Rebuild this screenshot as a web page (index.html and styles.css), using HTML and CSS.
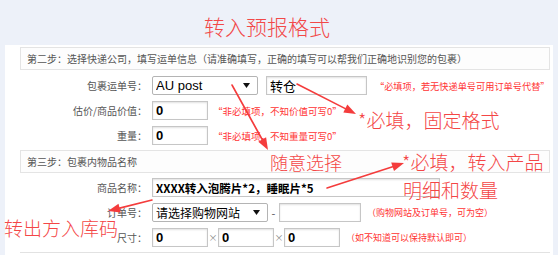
FILE: index.html
```html
<!DOCTYPE html>
<html>
<head>
  <title>转入预报格式</title>
  <link rel="stylesheet" href="styles.css">
</head>
<body>
  <h1 class="title">转入预报格式</h1>

  <div class="panel">
    <div class="step">第二步：选择快递公司，填写运单信息（请准确填写，正确的填写可以帮我们正确地识别您的包裹）</div>
    <div class="rows first">
      <div class="row">
        <label>包裹运单号：</label>
        <select class="sel carrier"><option>AU post</option></select>
        <input class="txt track" type="text" value="转仓">
        <span class="note track-note">“必填项，若无快递单号可用订单号代替”</span>
      </div>
      <div class="row">
        <label>估价/商品价值：</label>
        <input class="txt num" type="text" value="0">
        <span class="note">“非必填项，不知价值可写0”</span>
      </div>
      <div class="row">
        <label>重量：</label>
        <input class="txt num" type="text" value="0">
        <span class="note">“非必填项，不知重量可写0”</span>
      </div>
    </div>

    <div class="step step3">第三步：包裹内物品名称</div>
    <div class="rows">
      <div class="row">
        <label>商品名称：</label>
        <input class="txt goods" type="text" value="XXXX转入泡腾片*2，睡眠片*5">
      </div>
      <div class="row">
        <label>订单号：</label>
        <select class="sel shop"><option>请选择购物网站</option></select>
        <span class="dash">-</span>
        <input class="txt order" type="text" value="">
        <span class="note order-note">（购物网站及订单号，可为空）</span>
      </div>
      <div class="row">
        <label>尺寸：</label>
        <input class="txt num" type="text" value="0">
        <span class="times">×</span>
        <input class="txt num" type="text" value="0">
        <span class="times">×</span>
        <input class="txt num" type="text" value="0">
        <span class="note size-note">（如不知道可以保持默认即可）</span>
      </div>
    </div>
    <div class="rule"></div>
  </div>

  <!-- red hand-drawn notes on top of the screenshot -->
  <svg class="arrows" width="558" height="255" viewBox="0 0 558 255">
    <g stroke="#f43c3c" stroke-width="1.6" stroke-linecap="round">
      <line x1="297" y1="84" x2="345.3" y2="108.6"/>
      <line x1="232" y1="85" x2="262.2" y2="139.5"/>
      <line x1="327" y1="188" x2="392.6" y2="166.7"/>
      <line x1="152" y1="200" x2="119.6" y2="208.1"/>
    </g>
    <g fill="#f43c3c">
      <polygon points="356,114 343.3,112.6 347.3,104.6"/>
      <polygon points="268,150 258.3,141.7 266.1,137.3"/>
      <polygon points="404,163 394,171 391.2,162.4"/>
      <polygon points="108,211 118.5,203.7 120.7,212.5"/>
    </g>
  </svg>
  <span class="mark mark-fixed">*必填，固定格式</span>
  <span class="mark mark-any">随意选择</span>
  <span class="mark mark-goods">*必填，转入产品</span>
  <span class="mark mark-detail">明细和数量</span>
  <span class="mark mark-code">转出方入库码</span>
</body>
</html>
```

FILE: styles.css
```css
* {
  box-sizing: border-box;
  margin: 0;
  padding: 0;
}

body {
  font-family: "Noto Sans CJK SC", sans-serif;
  background: #edf1f9;
  width: 558px;
  height: 255px;
  overflow: hidden;
  position: relative;
}

.title {
  height: 45px;
  padding: 14px 24px 0 0;
  text-align: center;
  font-size: 21px;
  line-height: 24px;
  font-weight: 300;
  color: #f24848;
}

.panel {
  margin: 0 5px;
  background: #fff;
  padding: 2px 3px 0 0;
  height: 210px;
}

.step {
  margin-left: 15px;
  height: 23px;
  border: 1px solid #e4e4e4;
  background: #fdfdfd;
  padding-left: 6px;
  display: flex;
  align-items: center;
  font-size: 10px;
  color: #555;
}

.step3 {
  margin-top: 2px;
}

.rows {
  margin-top: 2px;
}

.rows.first {
  margin-top: 3px;
}

.row {
  height: 25px;
  display: flex;
  align-items: center;
}

.row label {
  width: 142px;
  margin-right: 5px;
  text-align: right;
  font-size: 10px;
  color: #555;
}

.txt, .sel {
  height: 19px;
  border: 1px solid #c6c6c6;
  box-shadow: inset 0 1px 2px rgba(0,0,0,0.12);
  background: #fff;
  font-family: "Liberation Sans", "Noto Sans CJK SC", sans-serif;
  font-size: 13px;
  color: #000;
  padding: 0 3px;
  outline: none;
}

.txt.num {
  width: 56px;
  font-weight: bold;
}

.txt.track {
  width: 101px;
  margin-left: 8px;
  font-family: "Noto Sans CJK SC", sans-serif;
  font-size: 13px;
}

.txt.goods {
  width: 288px;
  font-weight: bold;
  font-size: 11.5px;
  font-family: "Noto Sans CJK SC", sans-serif;
}

.txt.order {
  width: 82px;
}

.sel {
  appearance: none;
  -webkit-appearance: none;
  border-color: #b4b4b4;
  box-shadow: none;
  border-radius: 2px;
  background-image: url("data:image/svg+xml,%3Csvg xmlns='http://www.w3.org/2000/svg' width='7' height='5'%3E%3Cpolygon points='0,0 7,0 3.5,5' fill='%23111'/%3E%3C/svg%3E");
  background-repeat: no-repeat;
  background-position: right 7px center;
}

.sel.carrier {
  width: 106px;
}

.sel.shop {
  width: 116px;
  font-family: "Noto Sans CJK SC", sans-serif;
  font-size: 12px;
}

.dash {
  width: 11px;
  text-align: center;
  font-size: 11px;
  color: #555;
}

.times {
  width: 10px;
  text-align: center;
  font-size: 9px;
  color: #888;
}

.note {
  margin-left: 5px;
  font-size: 9.5px;
  color: #f33;
  white-space: nowrap;
}

.track-note {
  margin-left: 8px;
  font-size: 9.2px;
}

.order-note {
  margin-left: 6px;
  font-size: 9px;
}

.size-note {
  margin-left: 6px;
  font-size: 9px;
}

.rule {
  margin: 2px 0 0 15px;
  height: 1px;
  background: #e2e2e2;
}

.arrows {
  position: absolute;
  top: 0;
  left: 0;
  pointer-events: none;
}

.mark {
  position: absolute;
  font-size: 19px;
  line-height: 22px;
  font-weight: 300;
  color: #f44646;
  white-space: nowrap;
}

.mark-fixed {
  left: 358px;
  top: 109px;
}

.mark-any {
  left: 270px;
  top: 151px;
  font-size: 18px;
}

.mark-goods {
  left: 402px;
  top: 151px;
}

.mark-detail {
  left: 403px;
  top: 179px;
}

.mark-code {
  left: 4px;
  top: 217px;
}
```
